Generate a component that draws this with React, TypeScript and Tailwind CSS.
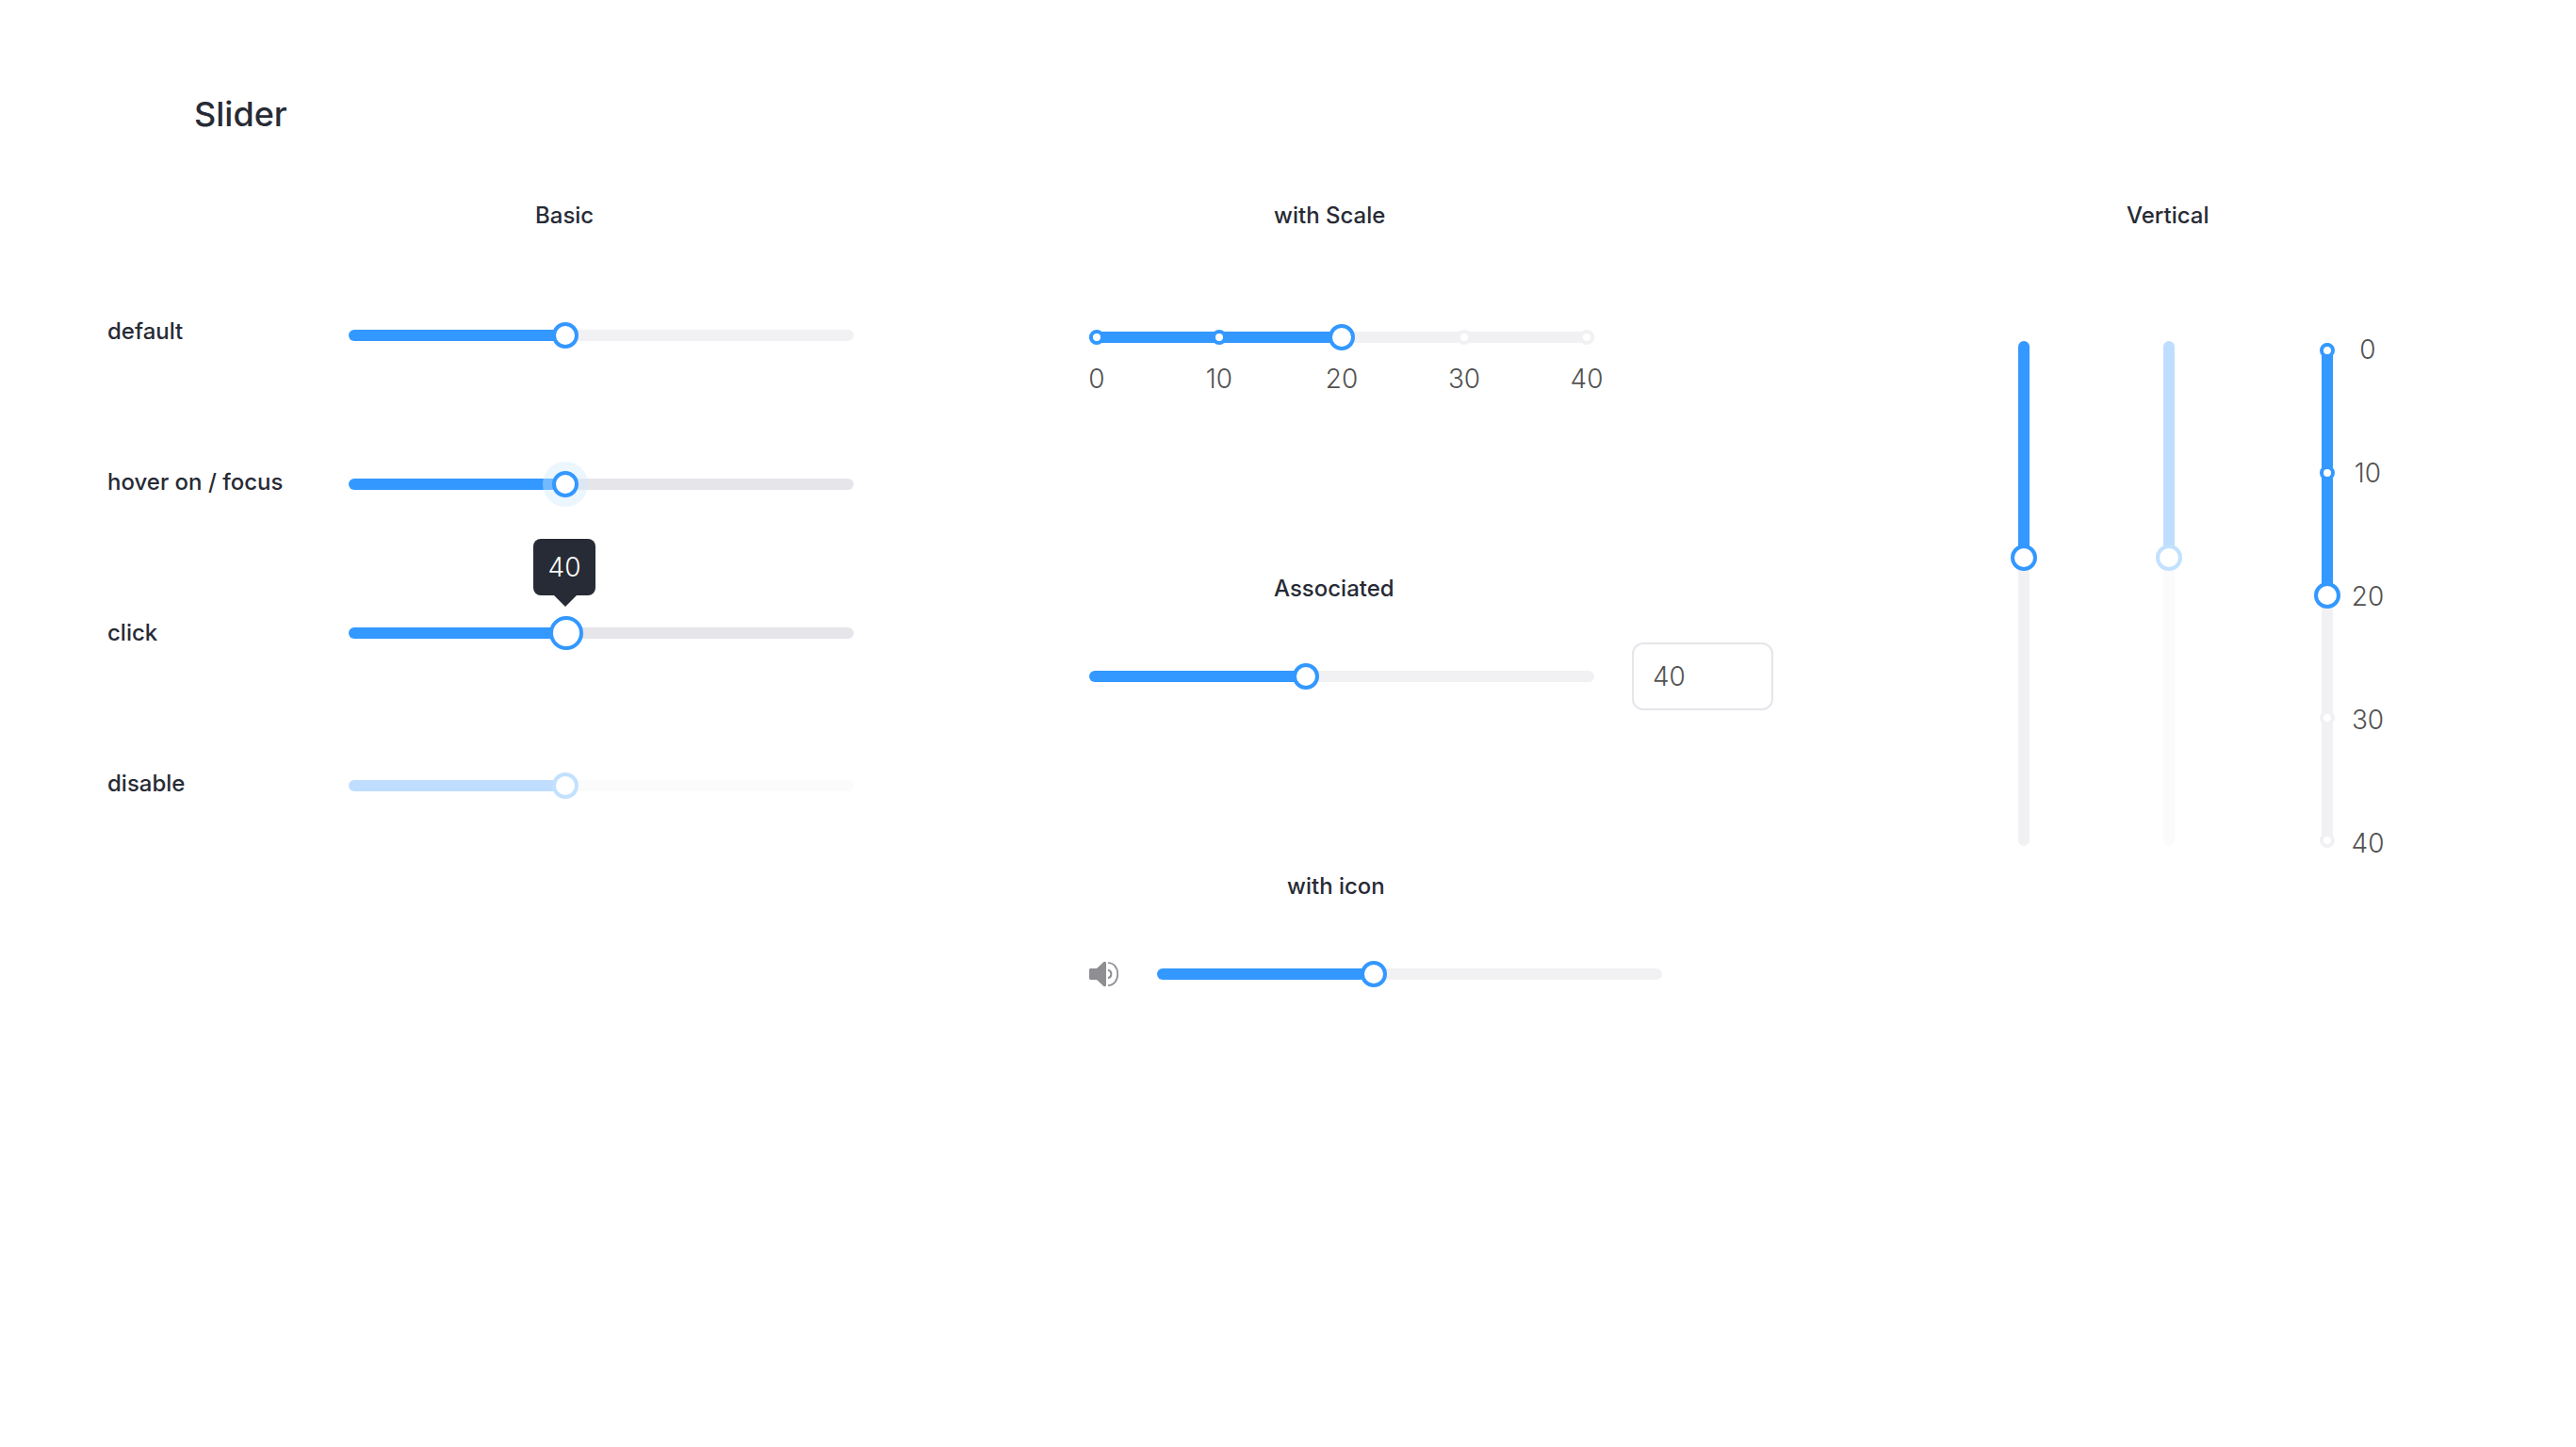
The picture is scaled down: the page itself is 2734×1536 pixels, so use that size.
import { useState, type CSSProperties } from "react";

type Tone = "normal" | "active" | "disabled";

const tones: Record<Tone, string> = {
  normal: "[--on:#3398ff] [--off:#f1f1f3] [--ring:#3398ff]",
  active: "[--on:#3398ff] [--off:#e5e5ea] [--ring:#3398ff]",
  disabled: "[--on:#bfdeff] [--off:#fbfbfc] [--ring:#c2e1ff]",
};

const base =
  "block appearance-none bg-transparent outline-none " +
  "[&::-webkit-slider-runnable-track]:rounded-full " +
  "[&::-webkit-slider-thumb]:appearance-none [&::-webkit-slider-thumb]:box-border [&::-webkit-slider-thumb]:rounded-full " +
  "[&::-webkit-slider-thumb]:border-4 [&::-webkit-slider-thumb]:border-(--ring) [&::-webkit-slider-thumb]:bg-white";

const thumbs = {
  normal:
    "[&::-webkit-slider-thumb]:size-7 [&::-webkit-slider-thumb]:[margin-block-start:-8px]",
  halo:
    "[&::-webkit-slider-thumb]:size-7 [&::-webkit-slider-thumb]:[margin-block-start:-8px] [&::-webkit-slider-thumb]:shadow-[0_0_0_10px_rgba(207,232,255,0.41)]",
  large:
    "[&::-webkit-slider-thumb]:size-9 [&::-webkit-slider-thumb]:[margin-block-start:-12px]",
};

const directions = {
  horizontal:
    "h-9 w-[536px] [&::-webkit-slider-runnable-track]:h-3 [&::-webkit-slider-runnable-track]:bg-[linear-gradient(to_right,var(--on)_var(--fill),var(--off)_var(--fill))]",
  vertical:
    "h-[536px] w-7 [writing-mode:vertical-lr] [&::-webkit-slider-runnable-track]:w-3 [&::-webkit-slider-runnable-track]:bg-[linear-gradient(to_bottom,var(--on)_var(--fill),var(--off)_var(--fill))]",
};

type SliderProps = {
  id?: string;
  label?: string;
  value: number;
  onChange: (value: number) => void;
  max?: number;
  tone?: Tone;
  thumb?: keyof typeof thumbs;
  direction?: keyof typeof directions;
};

function Slider({
  id,
  label,
  value,
  onChange,
  max = 94,
  tone = "normal",
  thumb = "normal",
  direction = "horizontal",
}: SliderProps) {
  const fill = { "--fill": `calc(14px + (100% - 28px) * ${value / max})` } as CSSProperties;
  return (
    <input
      id={id}
      aria-label={label}
      type="range"
      min={0}
      max={max}
      value={value}
      disabled={tone === "disabled"}
      onChange={(e) => onChange(Number(e.target.value))}
      style={fill}
      className={`${base} ${tones[tone]} ${thumbs[thumb]} ${directions[direction]}`}
    />
  );
}

const marks = [0, 10, 20, 30, 40];

function Ticks({ value, vertical = false }: { value: number; vertical?: boolean }) {
  return (
    <div
      className={`pointer-events-none absolute inset-0 flex items-center justify-between ${
        vertical ? "flex-col" : ""
      }`}
    >
      {marks.map((m) => (
        <span
          key={m}
          className={`size-4 rounded-full border-4 bg-white ${
            m < value ? "border-[#3398ff]" : "border-[#f1f1f3]"
          } ${m === value ? "invisible" : ""}`}
        />
      ))}
    </div>
  );
}

function SpeakerIcon() {
  return (
    <svg width="32" height="28" viewBox="0 0 32 28" fill="none" stroke="#8e8e93" aria-hidden="true">
      <path
        d="M1.5 8H8L15.2 1.3C16.3.3 18 .8 18 2.2V25.8C18 27.2 16.3 27.7 15.2 26.7L8 20H1.5C.7 20 0 19.3 0 18.5V9.5C0 8.7.7 8 1.5 8Z"
        fill="#8e8e93"
        stroke="none"
      />
      <path d="M20 9.8A4.300 4.300 0 0 1 20 18.200" strokeWidth="2" />
      <path d="M20 2C26 2 30.200 7 30.200 14S26 26 20 26" strokeWidth="1.700" />
    </svg>
  );
}

const heading = "text-2xl leading-8 font-medium";
const digits = "text-[28px] leading-8 font-light";

export default function App() {
  const [basic, setBasic] = useState(40);
  const [hover, setHover] = useState(40);
  const [click, setClick] = useState(40);
  const [scale, setScale] = useState(20);
  const [linked, setLinked] = useState(40);
  const [volume, setVolume] = useState(40);
  const [vertical, setVertical] = useState(40);
  const [verticalScale, setVerticalScale] = useState(20);
  const fixed = () => {};

  return (
    <main className="min-h-screen bg-white pt-[97px] pl-[114px] font-['Inter',sans-serif] text-[#272b35]">
      <h1 className="pl-[92px] text-4xl leading-12 font-medium">Slider</h1>

      <div className="mt-[68px] grid grid-cols-[1042fr_978fr_600fr] items-start">
        <section>
          <h2 className={`${heading} pl-[454px]`}>Basic</h2>
          <div className="mt-[89px] flex">
            <div className="flex w-64 flex-col gap-32 pt-[2px] text-2xl leading-8 font-medium">
              <label htmlFor="s-default">default</label>
              <label htmlFor="s-hover">hover on / focus</label>
              <label htmlFor="s-click">click</label>
              <label htmlFor="s-disable">disable</label>
            </div>
            <div className="flex flex-col gap-[122px] pt-1">
              <Slider id="s-default" value={basic} onChange={setBasic} />
              <Slider id="s-hover" value={hover} onChange={setHover} tone="active" thumb="halo" />
              <div className="relative">
                <Slider id="s-click" value={click} onChange={setClick} tone="active" thumb="large" />
                <output
                  htmlFor="s-click"
                  className={`${digits} absolute bottom-[58px] left-[196px] flex h-15 w-[66px] items-center justify-center rounded-lg bg-[#272b35] text-white`}
                >
                  {click}
                  <svg className="absolute top-full left-[22px]" width="24" height="12" viewBox="0 0 24 12" aria-hidden="true">
                    <path d="M0 0H24L12 12Z" fill="#272b35" />
                  </svg>
                </output>
              </div>
              <div className="pt-1">
                <Slider id="s-disable" value={40} onChange={fixed} tone="disabled" />
              </div>
            </div>
          </div>
        </section>

        <section>
          <h2 className={`${heading} pl-[196px]`}>with Scale</h2>
          <div className="mt-[95px] w-[536px]">
            <div className="relative">
              <Slider label="with Scale" value={scale} max={40} onChange={setScale} />
              <Ticks value={scale} />
            </div>
            <div className={`${digits} mt-[10px] flex justify-between text-[#525252]`}>
              {marks.map((m) => (
                <span key={m} className="flex w-4 justify-center">
                  {m}
                </span>
              ))}
            </div>
          </div>

          <h2 className={`${heading} mt-[191px] pl-[196px]`}>Associated</h2>
          <div className="mt-[41px] flex items-center gap-10">
            <Slider label="Associated" value={linked} onChange={setLinked} />
            <input
              aria-label="Associated value"
              value={linked}
              onChange={(e) => setLinked(Number(e.target.value) || 0)}
              className={`${digits} h-18 w-[150px] rounded-xl border-2 border-[#e5e5ea] px-5 text-[#525252] outline-none`}
            />
          </div>

          <h2 className={`${heading} mt-[171px] pl-[210px]`}>with icon</h2>
          <div className="mt-[59px] flex items-center gap-10">
            <SpeakerIcon />
            <Slider label="with icon" value={volume} onChange={setVolume} />
          </div>
        </section>

        <section>
          <h2 className={`${heading} pl-[123px]`}>Vertical</h2>
          <div className="mt-[110px] flex items-start">
            <div className="flex items-start pt-[7px]">
              <Slider label="Vertical" direction="vertical" value={vertical} onChange={setVertical} />
              <div className="ml-[126px]">
                <Slider label="Vertical disabled" direction="vertical" tone="disabled" value={40} onChange={fixed} />
              </div>
              <div className="ml-[140px] pt-[2px]">
                <div className="relative">
                  <Slider
                    label="Vertical with scale"
                    direction="vertical"
                    max={40}
                    value={verticalScale}
                    onChange={setVerticalScale}
                  />
                  <Ticks value={verticalScale} vertical />
                </div>
              </div>
            </div>
            <div className={`${digits} ml-[13px] flex h-[556px] w-8 flex-col items-center justify-between text-[#525252]`}>
              {marks.map((m) => (
                <span key={m}>{m}</span>
              ))}
            </div>
          </div>
        </section>
      </div>
    </main>
  );
}
